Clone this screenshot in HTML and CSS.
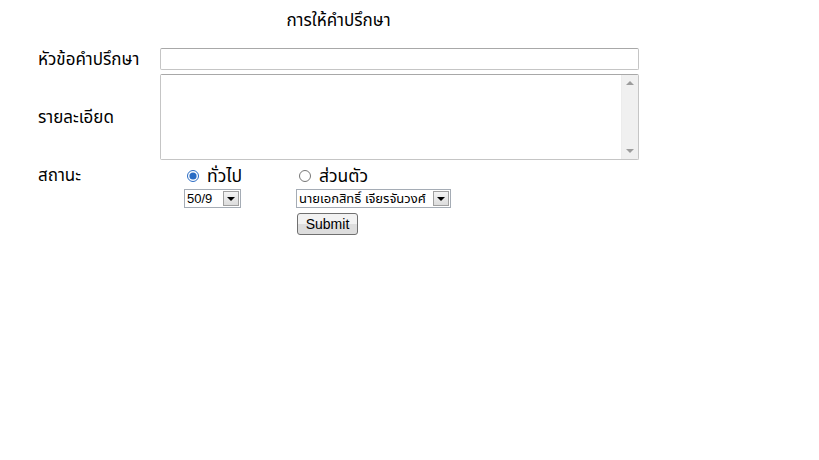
FILE: index.html
```html
<!DOCTYPE html>
<html lang="th">
<head>
    <meta charset="UTF-8">
    <title>การให้คำปรึกษา</title>
    <link rel="stylesheet" href="styles.css">
</head>
<body>
    <form class="consult-form" onsubmit="return false;">
        <div class="form-title">การให้คำปรึกษา</div>

        <div class="form-row">
            <label class="form-label" for="topic">หัวข้อคำปรึกษา</label>
            <input type="text" id="topic" class="text-input">
        </div>

        <div class="form-row row-middle">
            <label class="form-label" for="detail">รายละเอียด</label>
            <div class="area-box">
                <textarea id="detail" class="text-area"></textarea>
                <div class="scrollbar">
                    <span class="scroll-up"></span>
                    <span class="scroll-down"></span>
                </div>
            </div>
        </div>

        <div class="form-row row-top">
            <div class="form-label status-label">สถานะ</div>
            <div class="status-grid">
                <label class="radio-opt"><input type="radio" name="status" checked> ทั่วไป</label>
                <label class="radio-opt"><input type="radio" name="status"> ส่วนตัว</label>

                <span class="dropdown dd-room">
                    <select class="dropdown-select">
                        <option>50/9</option>
                    </select>
                    <span class="dropdown-btn"><span class="arrow"></span></span>
                </span>
                <span class="dropdown dd-person">
                    <select class="dropdown-select">
                        <option>นายเอกสิทธิ์ เจียรจันวงศ์</option>
                    </select>
                    <span class="dropdown-btn"><span class="arrow"></span></span>
                </span>

                <span></span>
                <button type="submit" class="submit-btn">Submit</button>
            </div>
        </div>
    </form>
</body>
</html>
```

FILE: styles.css
```css
body {
    margin: 0;
    background: #fff;
    color: #000;
    font-family: Tahoma, "Noto Sans Thai", "Noto Sans", "DejaVu Sans", sans-serif;
    font-size: 17px;
}
.consult-form {
    width: 601px;
    margin-left: 38px;
    padding-top: 10px;
}
.form-title {
    text-align: center;
    line-height: 22px;
    height: 22px;
    margin-bottom: 16px;
}
.form-row {
    display: flex;
    align-items: center;
    margin-bottom: 4px;
}
.row-top {
    align-items: flex-start;
    margin-top: 5px;
}
.form-label {
    width: 122px;
    flex: none;
    line-height: 20px;
    padding-top: 2px;
}
.status-label {
    line-height: 22px;
    padding-top: 0;
}
.text-input {
    width: 479px;
    height: 22px;
    box-sizing: border-box;
    margin: 0;
    border: 1px solid #c5c5c5;
    border-top-color: #a8a8a8;
    border-radius: 2px;
    padding: 1px 3px;
    font: inherit;
}
.area-box {
    display: flex;
    width: 479px;
    height: 86px;
    box-sizing: border-box;
    border: 1px solid #c5c5c5;
    border-top-color: #a8a8a8;
    border-radius: 2px;
}
.text-area {
    flex: 1;
    margin: 0;
    border: 0;
    padding: 2px;
    resize: none;
    outline: none;
    font: inherit;
}
.scrollbar {
    width: 16px;
    background: #f0f0f0;
    border-left: 1px solid #ececec;
    display: flex;
    flex-direction: column;
    justify-content: space-between;
    align-items: center;
    padding: 6px 0;
}
.scroll-up,
.scroll-down {
    width: 0;
    height: 0;
    border-left: 4px solid transparent;
    border-right: 4px solid transparent;
}
.scroll-up {
    border-bottom: 4px solid #9c9c9c;
}
.scroll-down {
    border-top: 4px solid #9c9c9c;
}
.status-grid {
    display: grid;
    grid-template-columns: 112px auto;
    padding-left: 24px;
    row-gap: 0;
    align-items: start;
}
.radio-opt {
    display: flex;
    align-items: center;
    height: 23px;
    padding-bottom: 1px;
    box-sizing: border-box;
    font-size: 17.5px;
    padding-left: 3px;
}
.radio-opt input {
    width: 12px;
    height: 12px;
    margin: 0 8px 0 0;
    accent-color: #2a6cc4;
}
.dropdown {
    display: inline-flex;
    justify-self: start;
    border: 1px solid #a5acb5;
    height: 19px;
    box-sizing: border-box;
    background: #fff;
    margin: 1px 0 5px;
}
.dd-room {
    width: 57px;
}
.dd-person {
    width: 155px;
}
.dropdown-select {
    flex: 1;
    min-width: 0;
    appearance: none;
    -webkit-appearance: none;
    border: 0;
    margin: 0;
    padding: 0 0 0 2px;
    background: transparent;
    font-family: "Liberation Sans", Tahoma, "Noto Sans Thai", sans-serif;
    font-size: 13px;
    height: 17px;
    line-height: 17px;
    color: #000;
}
.dropdown-btn {
    width: 16px;
    height: 15px;
    margin: 1px;
    box-sizing: border-box;
    border: 1px solid #a0a0a0;
    background: linear-gradient(#f4f4f4, #dcdcdc);
    display: flex;
    align-items: center;
    justify-content: center;
}
.arrow {
    width: 0;
    height: 0;
    border-left: 4px solid transparent;
    border-right: 4px solid transparent;
    border-top: 4px solid #000;
}
.submit-btn {
    justify-self: start;
    margin-left: 1px;
    width: 61px;
    height: 22px;
    padding: 0;
    border: 1px solid #707070;
    border-radius: 3px;
    background: linear-gradient(#f2f2f2 50%, #dddddd 50%);
    font-family: "Liberation Sans", Arial, sans-serif;
    font-size: 14px;
    color: #000;
}
```
